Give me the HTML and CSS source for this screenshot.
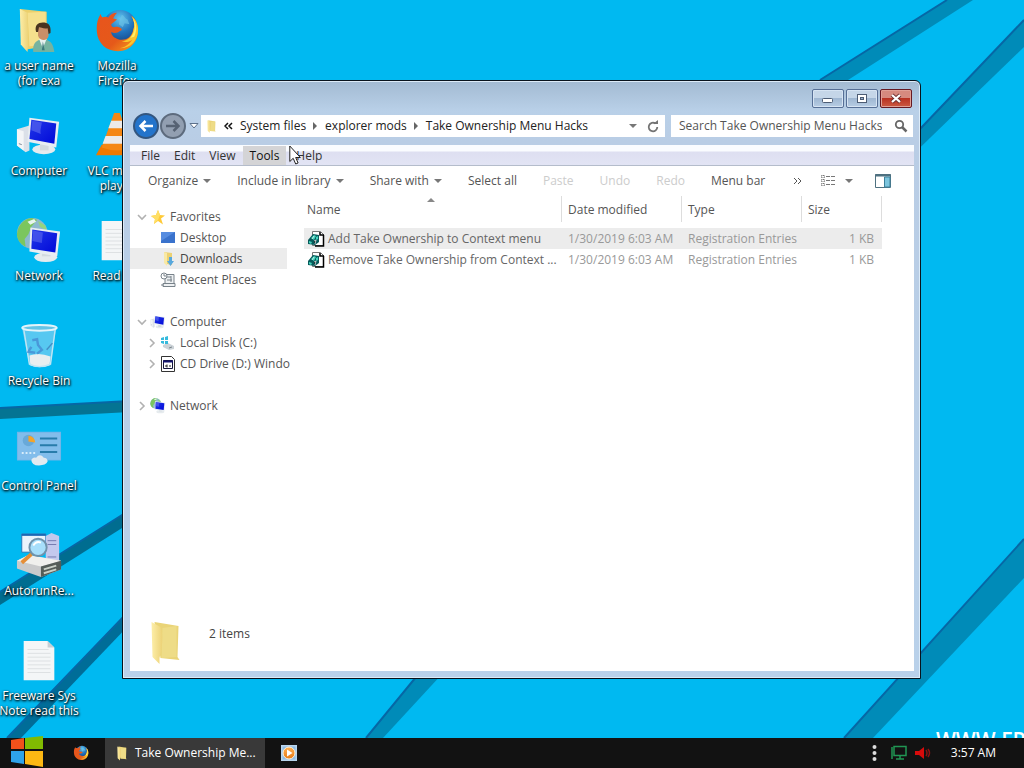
FILE: index.html
```html
<!DOCTYPE html>
<html lang="en">
<head>
<meta charset="utf-8">
<title>Take Ownership Menu Hacks</title>
<link rel="stylesheet" href="styles.css">
</head>
<body>
<svg class="defs" aria-hidden="true">
  <defs>
    <linearGradient id="fold" x1="0" x2="1"><stop offset="0" stop-color="#fdeea8"/><stop offset="1" stop-color="#ecd277"/></linearGradient>
    <linearGradient id="fox" x1="0" y1="0" x2="1" y2="1"><stop offset="0" stop-color="#e8541d"/><stop offset=".6" stop-color="#e5591a"/><stop offset="1" stop-color="#f8a51e"/></linearGradient>
    <radialGradient id="globe" cx=".5" cy=".25" r=".8"><stop offset="0" stop-color="#5fc4ee"/><stop offset=".5" stop-color="#2173bd"/><stop offset="1" stop-color="#123a7a"/></radialGradient>
    <linearGradient id="screen" x1="0" y1="0" x2="1" y2="1"><stop offset="0" stop-color="#2238e8"/><stop offset="1" stop-color="#0008d8"/></linearGradient>
    <linearGradient id="wmp" x1="0" y1="0" x2="0" y2="1"><stop offset="0" stop-color="#ffb054"/><stop offset="1" stop-color="#e87a14"/></linearGradient>
    <symbol id="firefox" viewBox="0 0 48 48">
      <circle cx="27" cy="20" r="18" fill="url(#globe)"/>
      <path d="M29 7c3 1 3 4 6 5l2 5-5-1-2 4-4-3 1-5z" fill="#71c7e8" opacity=".6"/>
      <path d="M5 10c-2 4-2.500 10-2 15 1 12 10 20 22 20 13 0 21-10 21-22 0-7-3-12-7-15 3 5 4 10 2 15-2 8-8 11-14 10-5-1-9-4-9-8 3 2 7 1 9-1 2-1 3-2 1-3-2-1-4-2-7-1-2 0-3-1-3-3l6-5-4-1c1-2 2-4 4-6-4 0-7 2-9 5-2-1-5-1-6 0-1-1-2-2-2-4z" fill="url(#fox)"/>
      <path d="M39 8c3 5 4 10 2 15-1 7-6 11-12 12 5 1 8 0 11-2-4 6-10 9-15 9 13 1 21-8 21-19 0-7-3-12-7-15z" fill="#fbc52c"/>
      <path d="M40 10c4 8 3 16-2 21l4-1c3-7 3-14-2-20z" fill="#fff06a"/>
    </symbol>
    <symbol id="folder" viewBox="0 0 30 44">
      <path d="M4 1l24 4-1 31 2 3-19-2z" fill="#ead477"/>
      <path d="M12 7l14-2v31l-15 1z" fill="#eedc87"/>
      <path d="M1 1l9 5c3 8 2 21-1 31v6L2 36z" fill="url(#fold)"/>
    </symbol>
    <symbol id="pc" viewBox="0 0 48 48">
      <path d="M1 17l13-4v26l-4 2-9-7z" fill="#dbe0e8"/><path d="M1 17l7 2v20l-7-5z" fill="#f3f5f7"/><path d="M3 32l3 1" stroke="#7b8794"/>
      <ellipse cx="29" cy="38" rx="12" ry="5" fill="#e6ebee"/><path d="M25 31h9v8h-9z" fill="#d3dadf"/>
      <path d="M14 5l31 4-3 27-30-6z" fill="#e8edf2"/><path d="M16 7l26 4-2 21-26-5z" fill="url(#screen)"/><path d="M17 8l10 2c-1 6-2 9-1 12l-10-4z" fill="#5b68ee" opacity=".65"/>
    </symbol>
    <symbol id="net" viewBox="0 0 48 48">
      <circle cx="17" cy="16" r="16" fill="#8eb9ce"/><path d="M1 17C2 7 8 1 17 0l5 2-6 7-3 8-4 5 1 8C4 27 1 22 1 17z" fill="#7bc65e"/><path d="M23 3l8 5 1 5-7-4z" fill="#94d47e"/><path d="M12 4l7-3 2 3-6 3z" fill="#e8f5ee"/>
      <ellipse cx="31" cy="41" rx="12" ry="5" fill="#e6ebee"/><path d="M27 34h9v6h-9z" fill="#d3dadf"/>
      <path d="M15 10l31 4-3 26-29-5z" fill="#e8edf2"/><path d="M17 12l26 4-2 20-25-4z" fill="url(#screen)"/><path d="M18 13l10 2-1 11-10-2z" fill="#5b68ee" opacity=".6"/>
    </symbol>
    <symbol id="page" viewBox="0 0 48 48">
      <path d="M8 3h25l7 7v34H8z" fill="#f4f6f7"/><path d="M33 3v7h7z" fill="#c8cfd4"/>
      <path d="M12 12h22M12 16h24M12 20h24M12 24h24M12 28h24M12 32h24M12 36h24" stroke="#dde0e2"/>
    </symbol>
    <symbol id="reg" viewBox="0 0 17 16">
      <path d="M4.500.5h8l3 3v11h-11z" fill="#fff" stroke="#777"/><path d="M12 1v3h4M15.500 4v11H7" fill="none" stroke="#000" stroke-width="1.500"/>
      <path d="M0 9l5-6 6 1v7l-4 3-7-1z" fill="#075b5b"/><path d="M3 7l3-3 2 1-2 4zM1 10l3 1-1 2-2-1zM8 6l2-1v3l-2 1z" fill="#43d3bd"/><path d="M6 10l2-1-1 4M4 8l2-3" stroke="#fff" stroke-width=".7"/>
    </symbol>
    <symbol id="right" viewBox="0 0 10 10"><path d="M3 1l4 4-4 4" fill="none" stroke="#b1b1b1" stroke-width="1.600"/></symbol>
    <symbol id="down" viewBox="0 0 10 10"><path d="M1 3l4 4 4-4" fill="none" stroke="#b1b1b1" stroke-width="1.600"/></symbol>
  </defs>
</svg>

<div class="screen">
  <main class="desktop">
    <svg class="wallpaper" viewBox="0 0 1024 738" preserveAspectRatio="none" aria-hidden="true">
      <g fill="#008bb8">
        <path d="M820 80L947 0h26L848 80z"/><path d="M1024 20L900 150v17L1024 47z"/>
        <path d="M1024 539L844 738h29l151-160z"/><path d="M430 660l-64 78h17l72-78z"/>
        <path d="M0 408l130-7v11L0 419z" fill="#047493"/><path d="M0 592l130-82v13L0 605z" fill="#006d90"/><path d="M130 610L7 738h14l109-114z" fill="#006d98"/>
      </g>
      <g fill="none" stroke="#0667a5" stroke-width="2">
        <path d="M820 80L947 0M1024 20L900 150M1024 539L844 738M430 660l-64 78M0 408l130-7M0 592l130-82M130 610L7 738"/>
      </g>
    </svg>
    <span class="watermark">WWW.FR</span>

    <nav class="shortcuts" aria-label="Desktop">
      <a class="shortcut" href="#user"><svg viewBox="0 0 48 48"><path d="M4 1l28 3v36l-20 3z" fill="#ecd06b"/><path d="M12 5l19-1v35l-17 1z" fill="#f5e08c"/><path d="M4 1l8 4 1 32-1 9-7-8z" fill="url(#fold)"/><path d="M18 46c-1-7 2-12 7-13h6c6 1 8 6 9 13z" fill="#76b3a0"/><path d="M24 32h8l-4 10z" fill="#e8f1ef"/><path d="M28 35l2 9h-3z" fill="#3c7a7c"/><path d="M23 20h11v9c-1 6-9 6-11 0z" fill="#c98f68"/><path d="M21 25c-2-7 2-10 7-10s9 2 8 11l-2 1-1-6c-4 1-7-1-9-1l-1 5z" fill="#49331f"/></svg><span>a user name<br>(for exa</span></a>
      <a class="shortcut" href="#computer"><svg><use href="#pc"/></svg><span>Computer</span></a>
      <a class="shortcut" href="#network"><svg><use href="#net"/></svg><span>Network</span></a>
      <a class="shortcut" href="#bin"><svg viewBox="0 0 48 48"><path d="M6 4h36l-6 40q-11 5-22 0z" fill="#74cdf0" opacity=".75"/><path d="M14 34q10-4 22 1l-1 9q-10 4-20 0z" fill="#e9eef0"/><path d="M8 6l6 37q10 5 22 0l5-37" fill="none" stroke="#bfe5f4" stroke-width="1.500"/><ellipse cx="24.500" cy="5" rx="18" ry="3" fill="#65c4e6" stroke="#e4f4fa" stroke-width="2"/><path d="M17 18l5-1 1 6 4 5-5 4M20 31l-7-1 3-5" fill="none" stroke="#4488d0" stroke-width="2.500" opacity=".75"/><path d="M32 28l6-7" stroke="#438fc5" stroke-width="1.500"/></svg><span>Recycle Bin</span></a>
      <a class="shortcut" href="#control"><svg viewBox="0 0 48 48"><path d="M1 4h46v30H1z" fill="#71b5e8"/><path d="M2 5h44v28H2z" fill="#82bdeb"/><circle cx="13" cy="13" r="6" fill="#68a9d9"/><path d="M13 14V8a7 7 0 0 1 7 7z" fill="#f4a42a"/><path d="M25 11h18M25 18h18M25 25h18" stroke="#287cab" stroke-width="2"/><path d="M6 26h14" stroke="#d7ecfa" stroke-width="2" stroke-dasharray="2 2"/><path d="M16 33q2-3 5-2 4-5 8 0 4 0 4 4-2 4-9 4-8 0-8-6z" fill="#e2eaf0"/></svg><span>Control Panel</span></a>
      <a class="shortcut" href="#autorun"><svg viewBox="0 0 48 48"><path d="M6 1h25v19H6z" fill="#eaf4fc" stroke="#2877b9"/><path d="M6 1h25v2H6z" fill="#1b67b4"/><path d="M31 3l6-3 8 3v26l-14 1z" fill="#c3c9ed"/><path d="M33 8h9M33 12h9M33 25h9" stroke="#7379ae"/><path d="M1 29l12-6 34 6v9L26 46 1 37z" fill="#c9cacb"/><path d="M1 29l12-6 34 6-21 6z" fill="#f0f0ed"/><path d="M26 35l21-6v9l-21 8z" fill="#555d59"/><path d="M29 38l13-4M29 42l13-4" stroke="#c9d0c7" stroke-width="2"/><circle cx="23" cy="15" r="9" fill="#a7dffb" stroke="#7092ab" stroke-width="2"/><path d="M18 13q3-5 8-3" stroke="#fff" stroke-width="2" fill="none"/><path d="M16 22L6 31" stroke="#e58e36" stroke-width="4"/></svg><span>AutorunRe...</span></a>
      <a class="shortcut" href="#note"><svg><use href="#page"/></svg><span>Freeware Sys<br>Note read this</span></a>
      <a class="shortcut" href="#firefox-app"><svg><use href="#firefox"/></svg><span>Mozilla<br>Firefox</span></a>
      <a class="shortcut" href="#vlc"><svg viewBox="0 0 48 48"><path d="M8 33h32l6 11H2z" fill="#ef7900"/><path d="M21 0h6l13 36q-16 6-32 0z" fill="#f58713"/><path d="M18 8h12l3 8H15zM12 24h24l3 8H9z" fill="#eceae8"/></svg><span>VLC media<br>player</span></a>
      <a class="shortcut" href="#readme"><svg><use href="#page"/></svg><span>Read me</span></a>
    </nav>

    <section class="window" aria-label="Take Ownership Menu Hacks">
      <header class="caption">
        <button class="cap" aria-label="Minimize"><svg viewBox="0 0 30 17"><rect x="9.500" y="8.500" width="10" height="4" rx="1" fill="#fff" stroke="#4c5c74"/></svg></button>
        <button class="cap" aria-label="Maximize"><svg viewBox="0 0 30 17"><rect x="10.500" y="4.500" width="9" height="8" fill="#fff" stroke="#4c5c74"/><rect x="13.500" y="7.500" width="3" height="2" fill="#9bb0ca" stroke="#4c5c74"/></svg></button>
        <button class="cap close" aria-label="Close"><svg viewBox="0 0 30 17"><path d="M11 5l8 7M19 5l-8 7" stroke="#6d3030" stroke-width="4"/><path d="M11 5l8 7M19 5l-8 7" stroke="#fff" stroke-width="2.300"/></svg></button>
      </header>
      <div class="navrow">
        <div class="travel">
          <button aria-label="Back"><svg class="round" viewBox="0 0 26 26"><circle cx="13" cy="13" r="12" fill="#2374cb" stroke="#33567f" stroke-width="2"/><path d="M20 13H8M12.500 8L7.500 13l5 5" fill="none" stroke="#fff" stroke-width="2.500"/></svg></button>
          <button aria-label="Forward"><svg class="round" viewBox="0 0 26 26"><circle cx="13" cy="13" r="12" fill="#929fb1" stroke="#5d6b7d" stroke-width="2"/><path d="M6 13h12M13.500 8l5 5-5 5" fill="none" stroke="#566273" stroke-width="2.500"/></svg></button>
          <button aria-label="Recent locations"><svg class="recent" viewBox="0 0 10 8"><path d="M1 1.500h8L5 6z" fill="#fff" stroke="#5d718b"/></svg></button>
        </div>
        <div class="address">
          <svg class="mini-folder"><use href="#folder"/></svg>
          <svg class="chev" viewBox="0 0 9 8"><path d="M4 1L1 4l3 3M8 1L5 4l3 3" fill="none" stroke="#111" stroke-width="1.500"/></svg>
          <a href="#system">System files</a><svg class="sep" viewBox="0 0 5 8"><path d="M0 0l4 4-4 4z" fill="#666"/></svg>
          <a href="#mods">explorer mods</a><svg class="sep" viewBox="0 0 5 8"><path d="M0 0l4 4-4 4z" fill="#666"/></svg>
          <a href="#hacks">Take Ownership Menu Hacks</a>
          <button class="history" aria-label="Previous locations"><i class="tri"></i></button>
          <button aria-label="Refresh"><svg class="refresh" viewBox="0 0 12 13"><path d="M8.500 3.500A4.300 4.300 0 1 0 10.300 7" fill="none" stroke="#737373" stroke-width="1.800"/><path d="M6 4h5V0z" fill="#737373"/></svg></button>
        </div>
        <div class="search">
          <input type="search" placeholder="Search Take Ownership Menu Hacks" aria-label="Search Take Ownership Menu Hacks">
          <svg viewBox="0 0 14 14"><circle cx="5.500" cy="5.500" r="3.700" fill="none" stroke="#666" stroke-width="1.800"/><path d="M8 8l4.500 4.500" stroke="#666" stroke-width="2.500"/></svg>
        </div>
      </div>

      <div class="menubar"><button>File</button><button>Edit</button><button>View</button><button class="active">Tools</button><button class="help">Help</button></div>

      <div class="content">
        <div class="toolbar">
          <button>Organize<i class="tri"></i></button>
          <button>Include in library<i class="tri"></i></button>
          <button>Share with<i class="tri"></i></button>
          <button>Select all</button>
          <button disabled>Paste</button>
          <button disabled>Undo</button>
          <button disabled>Redo</button>
          <button>Menu bar</button>
          <div class="tools-end">
            <button aria-label="More commands"><svg class="chev" viewBox="0 0 9 8"><path d="M1 1l3 3-3 3M5 1l3 3-3 3" fill="none" stroke="#555"/></svg></button>
            <button class="views" aria-label="Change view"><svg class="small" viewBox="0 0 16 14"><path d="M1.500 1.500h3v2h-3zM1.500 5.500h3v2h-3zM1.500 9.500h3v2h-3z" fill="#fff" stroke="#777" stroke-dasharray="1 .5"/><path d="M6 2.500h4M11 2.500h4M6 6.500h4M11 6.500h4M6 10.500h4M11 10.500h4" stroke="#777"/></svg><i class="tri"></i></button>
            <button aria-label="Preview pane"><svg class="small" viewBox="0 0 16 14"><path d="M.5.500h15v13H.5z" fill="#fff" stroke="#4e7180"/><path d="M0 1.500h16" stroke="#4e7180" stroke-width="2"/><path d="M9.500 3h5.500v10H9.500z" fill="#7cc5de" stroke="#3c809a"/></svg></button>
          </div>
        </div>

        <div class="panes">
          <nav class="tree" aria-label="Folders">
            <a class="root" href="#fav"><svg class="exp"><use href="#down"/></svg><svg class="ico" viewBox="0 0 16 16"><path d="M8 1l2 5 5 .500-4 3 2 6-5-3.500L4 15l1-5-4-3 5-1z" fill="#ffca38"/><path d="M8 1l2 5-2 5-4 4 1-5-4-3 5-1z" fill="#ffdf65"/></svg>Favorites</a>
            <a href="#desk"><svg class="exp"></svg><svg class="ico" viewBox="0 0 16 16"><path d="M1 2h14v11H1z" fill="#3a72cc"/><path d="M1 2h14L1 11z" fill="#568ce0"/></svg>Desktop</a>
            <a class="selected" href="#downloads"><svg class="exp"></svg><svg class="ico" viewBox="0 0 16 16"><path d="M4 1l8 1v12l-5-1z" fill="#ecd173"/><path d="M4 1l3 1v13l-3-3z" fill="#f9e9a5"/><path d="M9 6h3v4h2l-3.500 5L7 10h2z" fill="#58a8dd"/></svg>Downloads</a>
            <a href="#recent"><svg class="exp"></svg><svg class="ico" viewBox="0 0 16 16"><path d="M5 2.500h9v9H5zM3 11.500h12v3H3zM7 5h4M7 8h5M11 4v6" fill="#edf0f2" stroke="#78828a"/><circle cx="4" cy="4" r="3" fill="#fff" stroke="#78828a"/><path d="M4 2v2h2M1 13h3" stroke="#78828a" fill="none"/></svg>Recent Places</a>
            <a class="root group" href="#comp"><svg class="exp"><use href="#down"/></svg><svg class="ico"><use href="#pc"/></svg>Computer</a>
            <a href="#c"><svg class="exp"><use href="#right"/></svg><svg class="ico" viewBox="0 0 16 16"><path d="M3 10l5-2 6 3v3l-5 1-6-3z" fill="#cbd2d7"/><path d="M1 3l3-1v3H1zM5 2l3-1v4H5zM1 6h3v3L1 8zM5 6h3v3H5z" fill="#35badd"/><path d="M9 13l3-1" stroke="#7b858b"/></svg>Local Disk (C:)</a>
            <a href="#d"><svg class="exp"><use href="#right"/></svg><svg class="ico" viewBox="0 0 16 16"><path d="M1.500.500h10l3 3v12h-13z" fill="#fff" stroke="#333"/><path d="M3.500 4.500h9v8h-9z" fill="#fff" stroke="#16163a"/><path d="M3 5.500h10" stroke="#15156e" stroke-width="2"/><path d="M5 10h2M9 10h2M7 8.500v3" stroke="#222"/></svg>CD Drive (D:) Windo</a>
            <a class="root group" href="#net2"><svg class="exp"><use href="#right"/></svg><svg class="ico"><use href="#net"/></svg>Network</a>
          </nav>

          <div class="files">
            <table>
              <colgroup><col class="c-name"><col class="c-date"><col class="c-type"><col class="c-size"></colgroup>
              <thead><tr><th class="sorted">Name</th><th>Date modified</th><th>Type</th><th>Size</th></tr></thead>
              <tbody>
                <tr class="hot"><td><span class="file"><svg><use href="#reg"/></svg>Add Take Ownership to Context menu</span></td><td>1/30/2019 6:03 AM</td><td>Registration Entries</td><td>1 KB</td></tr>
                <tr><td><span class="file"><svg><use href="#reg"/></svg>Remove Take Ownership from Context ...</span></td><td>1/30/2019 6:03 AM</td><td>Registration Entries</td><td>1 KB</td></tr>
              </tbody>
            </table>
          </div>
        </div>
        <footer class="details"><svg><use href="#folder"/></svg><span>2 items</span></footer>
      </div>
    </section>
    <svg class="cursor" viewBox="0 0 12 20" aria-hidden="true"><path d="M.8 1v15.500l3.400-3.200 2.500 5.700 2.400-1-2.400-5.500h4.600z" fill="#fff" stroke="#222"/></svg>
  </main>

  <footer class="taskbar">
    <button class="start" aria-label="Start"><svg viewBox="0 0 32 31"><path d="M0 4l13-2v11H0z" fill="#f1511b"/><path d="M14 2l18-2v13H14z" fill="#80bb01"/><path d="M0 15h13v13L0 26z" fill="#2ea3ea"/><path d="M14 15h18v16l-18-3z" fill="#fdb813"/></svg></button>
    <button class="pin" aria-label="Mozilla Firefox"><svg><use href="#firefox"/></svg></button>
    <button class="task"><svg><use href="#folder"/></svg>Take Ownership Me...</button>
    <button class="pin" aria-label="Media player"><svg viewBox="0 0 16 16"><path d="M0 0h16v16H0z" fill="#b9d5ed"/><path d="M1.500 1.500h13v13h-13z" fill="#8fbbe2"/><circle cx="8" cy="8" r="6" fill="url(#wmp)" stroke="#fff3dd"/><path d="M6 4.500l5.500 3.500L6 11.500z" fill="#fff"/></svg></button>
    <div class="tray">
      <button aria-label="Show hidden icons"><svg class="dots" viewBox="0 0 5 18"><g fill="#ddd"><circle cx="2.500" cy="3" r="2"/><circle cx="2.500" cy="9" r="2"/><circle cx="2.500" cy="15" r="2"/></g></svg></button>
      <button aria-label="Network status"><svg viewBox="0 0 16 16"><path d="M3 1.500h12v9H3zM9 11v3M5 14h8M1 2v12" fill="none" stroke="#219653" stroke-width="1.500"/></svg></button>
      <button aria-label="Volume"><svg viewBox="0 0 16 16"><path d="M0 6h4l5-4v12l-5-4H0z" fill="#d80b0b"/><path d="M11 5q2 3 0 6M13 4q3 4 0 8" fill="none" stroke="#8b1212" stroke-width="1.500"/></svg></button>
      <time>3:57 AM</time>
    </div>
  </footer>
</div>
</body>
</html>
```
FILE: styles.css
```css
* { box-sizing: border-box; }
body { margin: 0; font: 12px/16px "Open Sans", "Noto Sans", sans-serif; color: #555; }
button, input { font: inherit; color: inherit; border: 0; background: none; padding: 0; margin: 0; }
button { display: flex; align-items: center; white-space: nowrap; }
a { color: inherit; text-decoration: none; }
svg { display: block; flex: none; }
.defs { position: absolute; width: 0; height: 0; }
.screen { display: flex; flex-direction: column; height: 100vh; overflow: hidden; }

.desktop { position: relative; flex: 1; min-height: 0; overflow: hidden; background: #00b9f1; }
.wallpaper { position: absolute; inset: 0; width: 100%; height: 100%; }
.watermark { position: absolute; left: 936px; bottom: -16px; font-size: 21px; line-height: 28px; font-weight: 600; color: #fff; }
.shortcuts { position: relative; display: grid; height: 100%; grid-auto-flow: column; grid-template-rows: repeat(auto-fill, 105px); grid-auto-columns: 78px; justify-content: start; }
.shortcut { display: flex; flex-direction: column; align-items: center; gap: 3px; padding-top: 7px; color: #fff; line-height: 15px; text-align: center; white-space: nowrap; text-shadow: 1px 1px 2px #000, 0 1px 3px #000; }
.shortcut svg { width: 46px; height: 48px; }

.window { position: absolute; top: 80px; right: 103px; bottom: 59px; left: 122px; display: flex; flex-direction: column; padding: 0 6px 7px 7px; border: 1px solid #08131d; border-radius: 6px 6px 0 0; box-shadow: inset 0 0 0 1px #dcebf8; background: linear-gradient(#a2bad2 0, #b9d0e8 30px, #b9cde5 60px, #b9d1ea 100%); }
.caption { display: flex; justify-content: flex-end; gap: 2px; height: 34px; padding: 8px 2px 0 0; }
.cap { width: 32px; height: 19px; border: 1px solid #566f96; border-radius: 2px; box-shadow: inset 0 0 0 1px #d6e4f3; background: linear-gradient(#c5d6e8 50%, #9fb7d2 50%, #b7cde4); }
.cap svg { width: 30px; height: 17px; }
.cap.close { border-color: #661922; box-shadow: inset 0 0 0 1px #e0a096; background: linear-gradient(#d68a7f 50%, #b93222 50%, #cc5a42); }
.navrow { display: flex; align-items: center; height: 22px; padding: 0 1px 0 3px; }
.travel { display: flex; align-items: center; gap: 1px; width: 68px; }
.round { width: 26px; height: 26px; }
.recent { width: 10px; height: 8px; margin-left: 2px; }
.address { display: flex; align-items: center; flex: 1; height: 22px; padding: 0 6px; background: #fff; color: #222; white-space: nowrap; }
.mini-folder { width: 9px; height: 15px; margin-right: 8px; }
.chev { width: 9px; height: 8px; }
.address .chev { margin-right: 7px; }
.sep { width: 5px; height: 8px; margin: 0 7px; }
.history { margin-left: auto; }
.refresh { width: 12px; height: 13px; margin-left: 10px; }
.search { display: flex; align-items: center; width: 242px; height: 22px; margin-left: 6px; padding: 0 5px 0 8px; background: #fff; }
.search input { flex: 1; min-width: 0; outline: 0; }
.search input::placeholder { color: #555; opacity: 1; }
.search svg { width: 14px; height: 14px; }

.menubar { display: flex; height: 21px; margin-top: 8px; padding: 1px 0 0 4px; border-bottom: 1px solid #b4bccb; background: linear-gradient(#fafcff 6px, #dedff1 7px, #e2e4f4); color: #333; }
.menubar button { padding: 0 7px; }
.menubar .active { background: #d4d4d6; color: #111; }
.menubar .help { padding-left: 10px; }

.content { display: flex; flex: 1; flex-direction: column; min-height: 0; background: #fff; }
.toolbar { display: flex; align-items: center; gap: 26px; height: 30px; padding: 0 23px 0 18px; }
.toolbar button:disabled { color: #ccc; }
.tri { width: 0; height: 0; border: 4px solid transparent; border-top-color: #777; border-bottom: 0; }
.toolbar .tri { margin-left: 5px; }
.tools-end { display: flex; align-items: center; gap: 18px; margin-left: auto; }
.small { width: 16px; height: 14px; }
.tools-end .views { margin-right: 4px; }
.tools-end .views .tri { margin-left: 9px; }

.panes { display: flex; flex: 1; min-height: 0; }
.tree { width: 157px; margin-right: 17px; padding-top: 10px; }
.tree a { display: flex; align-items: center; height: 21px; padding-left: 17px; white-space: nowrap; }
.tree .root { padding-left: 7px; }
.tree .group { margin-top: 21px; }
.exp { width: 10px; height: 10px; }
.ico { width: 16px; height: 16px; margin: 0 4px 0 3px; }
.tree .selected { background: #ececec; color: #444; }

.files { flex: 1; min-width: 0; overflow: hidden; }
table { width: 578px; table-layout: fixed; border-collapse: separate; border-spacing: 0; }
.c-name { width: 258px; }
.c-date, .c-type { width: 120px; }
.c-size { width: 80px; }
th, td { padding: 0 6px; font-weight: 400; text-align: left; white-space: nowrap; }
th { position: relative; height: 26px; padding-top: 2px; border-right: 1px solid #ddd; }
th:first-child { padding-left: 3px; }
th.sorted::before { content: ""; position: absolute; left: 48%; top: 2px; border: 4px solid transparent; border-bottom-color: #888; border-top: 0; }
tbody::before { content: ""; display: block; height: 6px; }
td { height: 21px; color: #999; }
td:first-child { padding-left: 4px; color: #666; }
td:last-child { padding-right: 8px; text-align: right; }
.hot td { background: #ececec; }
.file { display: flex; align-items: center; gap: 3px; }
.file svg { width: 17px; height: 16px; }
.details { display: flex; gap: 28px; height: 55px; padding: 5px 0 0 20px; color: #444; }
.details svg { width: 31px; height: 44px; }
.details span { padding-top: 5px; }
.cursor { position: absolute; left: 289px; top: 145px; width: 12px; height: 20px; }

.taskbar { position: relative; display: flex; align-items: stretch; height: 30px; background: #121212; color: #fff; }
.start { padding-left: 11px; width: 65px; }
.start svg { width: 32px; height: 31px; margin-top: -4px; }
.pin { width: 32px; justify-content: center; }
.pin svg { width: 16px; height: 16px; }
.task { width: 160px; margin: 0 8px; padding-left: 12px; gap: 8px; background: #393939; }
.task svg { width: 10px; height: 15px; }
.tray { display: flex; align-items: center; gap: 8px; margin-left: auto; padding-right: 28px; }
.tray svg { width: 16px; height: 16px; }
.tray .dots { width: 5px; height: 18px; margin-right: 6px; }
.tray time { margin-left: 12px; }
```
